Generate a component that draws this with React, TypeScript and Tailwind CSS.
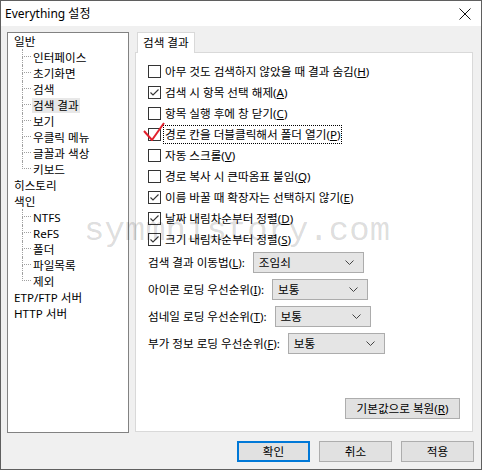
import React from 'react';

const font = { fontFamily: '"Noto Sans", "Noto Sans CJK KR", sans-serif' };

const Mn = ({ k }: { k: string }) => (
  <>
    (<u className="underline-offset-[1px]">{k}</u>)
  </>
);

const Check = ({ checked }: { checked?: boolean }) => (
  <div className="w-[13px] h-[13px] border border-[#333] bg-white shrink-0 flex items-center justify-center">
    {checked && (
      <svg width="11" height="11" viewBox="0 0 11 11">
        <polyline points="1.5,5.5 4,8 9.5,2.5" fill="none" stroke="#333" strokeWidth="1.1" />
      </svg>
    )}
  </div>
);

const CheckRow = ({ checked, label, k, focus, mark }: { checked?: boolean; label: string; k: string; focus?: boolean; mark?: boolean }) => (
  <div className="h-[21px] flex items-center">
    <div className="relative">
      <Check checked={checked} />
      {mark && (
        <svg className="absolute left-[-6px] top-[-7px] pointer-events-none" width="26" height="22" viewBox="0 0 26 22">
          <polyline points="2,10 10,19 22,2" fill="none" stroke="#e2202c" strokeWidth="2" strokeLinejoin="round" />
        </svg>
      )}
    </div>
    <span className={`ml-[2px] px-[1px] leading-[17px] ${focus ? 'border border-dotted border-black' : 'border border-transparent'}`}>
      {label}
      <Mn k={k} />
    </span>
  </div>
);

const Select = ({ value, w }: { value: string; w: string }) => (
  <div className={`${w} h-[21px] bg-[#e5e5e5] border border-[#acacac] flex items-center justify-between pl-[5px] pr-[9px]`}>
    <span>{value}</span>
    <svg width="9" height="5" viewBox="0 0 9 5">
      <polyline points="0.5,0.5 4.5,4.5 8.5,0.5" fill="none" stroke="#444" strokeWidth="1" />
    </svg>
  </div>
);

const SelectRow = ({ label, k, value, w }: { label: string; k: string; value: string; w: string }) => (
  <div className="h-[21px] flex items-center gap-[8px]">
    <span>
      {label}
      <Mn k={k} />:
    </span>
    <Select value={value} w={w} />
  </div>
);

const TreeChild = ({ text, last, selected }: { text: string; last?: boolean; selected?: boolean }) => (
  <div className="h-[16px] flex items-center">
    <div className="w-[14px] shrink-0" />
    <div className="w-[9px] h-[16px] shrink-0 flex flex-col">
      <div className="h-[8px] border-l border-b border-dotted border-[#a0a0a0]" />
      <div className={`h-[8px] ${last ? '' : 'border-l border-dotted border-[#a0a0a0]'}`} />
    </div>
    <span className={`ml-[1px] px-[1px] leading-[15px] ${selected ? 'bg-[#e8e8e8]' : ''}`}>{text}</span>
  </div>
);

const TreeTop = ({ text }: { text: string }) => (
  <div className="h-[16px] flex items-center pl-[6px]">
    <span className="leading-[15px]">{text}</span>
  </div>
);

const Button = ({ children, primary, w = 'w-[73px]' }: { children: React.ReactNode; primary?: boolean; w?: string }) => (
  <div
    className={`${w} h-[21px] flex items-center justify-center bg-[#e1e1e1] ${primary ? 'border-2 border-[#0078d7]' : 'border border-[#adadad]'}`}
  >
    {children}
  </div>
);

export default function App() {
  return (
    <div className="relative w-[482px] h-[470px] border border-[#5f5f5f] flex flex-col text-[11.6px] text-black bg-[#f0f0f0] overflow-hidden" style={font}>
      {/* Title bar */}
      <div className="h-[25px] bg-white flex items-center justify-between pl-[4px] pr-[10px] shrink-0">
        <span className="text-[12px]">Everything 설정</span>
        <svg width="12" height="12" viewBox="0 0 12 12">
          <path d="M0.5 0.5 L11.5 11.5 M11.5 0.5 L0.5 11.5" stroke="#111" strokeWidth="1" />
        </svg>
      </div>

      {/* Body */}
      <div className="flex-1 flex flex-col pt-[6px] px-[6px]">
        <div className="flex gap-[6px] h-[401px]">
          {/* Tree */}
          <div className="w-[122px] h-[401px] bg-white border border-[#828282] pt-[0px]">
            <TreeTop text="일반" />
            <TreeChild text="인터페이스" />
            <TreeChild text="초기화면" />
            <TreeChild text="검색" />
            <TreeChild text="검색 결과" selected />
            <TreeChild text="보기" />
            <TreeChild text="우클릭 메뉴" />
            <TreeChild text="글꼴과 색상" />
            <TreeChild text="키보드" last />
            <TreeTop text="히스토리" />
            <TreeTop text="색인" />
            <TreeChild text="NTFS" />
            <TreeChild text="ReFS" />
            <TreeChild text="폴더" />
            <TreeChild text="파일목록" />
            <TreeChild text="제외" last />
            <TreeTop text="ETP/FTP 서버" />
            <TreeTop text="HTTP 서버" />
          </div>

          {/* Tab area */}
          <div className="w-[338px] flex flex-col">
            <div className="flex h-[20px] pl-[2px]">
              <div className="relative z-10 h-[21px] px-[5px] bg-white border border-b-0 border-[#d9d9d9] flex items-center">
                검색 결과
              </div>
            </div>
            <div className="h-[380px] bg-white border border-[#d9d9d9] flex flex-col pl-[12px] pr-[12px] pt-[8px] pb-[12px]">
              <CheckRow label="아무 것도 검색하지 않았을 때 결과 숨김" k="H" />
              <CheckRow checked label="검색 시 항목 선택 해제" k="A" />
              <CheckRow label="항목 실행 후에 창 닫기" k="C" />
              <CheckRow label="경로 칸을 더블클릭해서 폴더 열기" k="P" focus mark />
              <CheckRow label="자동 스크롤" k="V" />
              <CheckRow label="경로 복사 시 큰따옴표 붙임" k="Q" />
              <CheckRow checked label="이름 바꿀 때 확장자는 선택하지 않기" k="E" />
              <CheckRow checked label="날짜 내림차순부터 정렬" k="D" />
              <CheckRow checked label="크기 내림차순부터 정렬" k="S" />
              <div className="flex flex-col gap-[6px] mt-[2px]">
                <SelectRow label="검색 결과 이동법" k="L" value="조임쇠" w="w-[111px]" />
                <SelectRow label="아이콘 로딩 우선순위" k="I" value="보통" w="w-[96px]" />
                <SelectRow label="섬네일 로딩 우선순위" k="T" value="보통" w="w-[96px]" />
                <SelectRow label="부가 정보 로딩 우선순위" k="F" value="보통" w="w-[97px]" />
              </div>
              <div className="mt-auto flex justify-end">
                <Button w="w-[115px]">
                  기본값으로 복원<Mn k="R" />
                </Button>
              </div>
            </div>
          </div>
        </div>

        {/* Bottom buttons */}
        <div className="flex justify-end gap-[9px] mt-[8px] pr-[1px]">
          <Button primary>확인</Button>
          <Button>취소</Button>
          <Button>적용</Button>
        </div>
      </div>

      {/* Watermark */}
      <div
        className="absolute left-[83px] top-[213px] text-[34px] leading-none text-black/15 pointer-events-none select-none"
        style={{ fontFamily: '"Liberation Mono", monospace' }}
      >
        symmhistory.com
      </div>
    </div>
  );
}
